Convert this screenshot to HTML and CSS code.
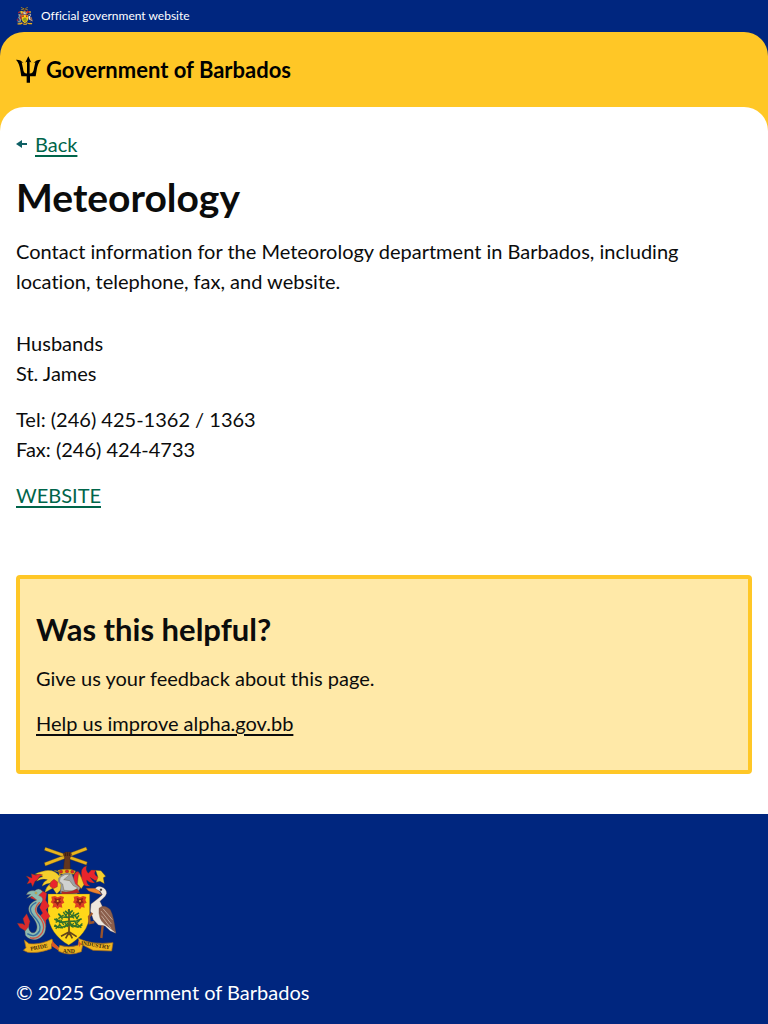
FILE: index.html
```html
<!DOCTYPE html>
<html lang="en">
<head>
<meta charset="utf-8">
<meta name="viewport" content="width=device-width, initial-scale=1">
<title>Meteorology - Government of Barbados</title>
<link rel="stylesheet" href="styles.css">
</head>
<body>
<div class="official">
  <svg class="official-crest" viewBox="18 18 303 327" aria-hidden="true"><use href="#arms"/></svg>
  <span>Official government website</span>
</div>
<div class="header-back">
  <header class="header">
    <a class="brand" href="#">
      <svg class="trident" viewBox="0 0 75 80" aria-hidden="true">
        <path d="M37 0L46 19L41 17V52C49 52 53 46 54 36L58 18L52 21Q62 10 75 11C67 19 64 30 62 42L59 60H42V80H32V60H16L13 42C11 30 8 19 0 11Q13 10 23 21L17 18L21 36C22 46 25 52 33 52V17L28 19Z"/>
      </svg>
      <span>Government of Barbados</span>
    </a>
  </header>
</div>
<div class="main-back">
  <main class="main">
    <a class="back" href="#">
      <svg class="back-arrow" viewBox="0 0 12 10" aria-hidden="true"><path d="M0 5L6 1V4H11V6H6V9Z"/></svg>
      <span>Back</span>
    </a>
    <h1>Meteorology</h1>
    <p class="lead">Contact information for the Meteorology department in Barbados, including location, telephone, fax, and website.</p>
    <div class="contact">
      <p>Husbands<br>St. James</p>
      <p>Tel: (246) 425-1362 / 1363<br>Fax: (246) 424-4733</p>
      <p><a class="website" href="#">WEBSITE</a></p>
    </div>
    <section class="feedback">
      <h2>Was this helpful?</h2>
      <p>Give us your feedback about this page.</p>
      <p><a href="#">Help us improve alpha.gov.bb</a></p>
    </section>
  </main>
</div>
<footer class="footer">
  <svg class="footer-crest" viewBox="18 18 303 327" role="img" aria-label="Coat of arms of Barbados">
    <g id="arms">
      <g stroke="#604713" stroke-width="1">
        <path fill="#e9b51e" d="M103 68L228 21L232 30L106 78ZM106 22L232 66L229 75L103 31Z"/>
        <path fill="#62361f" stroke="#361c12" d="M160 90L164 53L159 41L167 36L182 36L185 44L180 54L181 90Z"/>
        <path stroke="#24110b" stroke-width="2" d="M166 38V48M172 37V48M178 38V48"/>
        <path fill="#f5cf2d" d="M158 130C156 104 145 88 132 92L146 97L148 107Q128 84 98 94Q84 97 74 103Q92 104 98 110Q83 112 80 124Q98 114 112 119Q98 126 96 139Q112 128 124 130Q108 138 104 158L128 145L140 162L152 150Z"/>
        <path fill="#e9252c" d="M49 108L66 114L64 101L78 106Q86 98 98 105Q87 108 82 120L75 124L68 140L63 128L51 132L58 119ZM122 126L132 118L143 126L142 140L130 146L119 138Z"/>
        <path fill="#e9252c" d="M190 128C188 102 200 88 208 98L216 112Q208 84 230 77Q225 90 235 100L244 90L258 91Q248 103 262 110L276 104L272 122L254 121L240 112Q246 122 254 128Q240 131 230 120Q229 132 240 138Q222 140 216 128L210 148L198 150Z"/>
        <path fill="#f5cf2d" d="M257 91L273 92L287 109L280 113L283 131L270 124L258 127L264 112ZM206 98L214 113L222 134L214 146L202 132Z"/>
        <path fill="#edb519" d="M143 91L158 88H183L197 93L192 103H150Z"/>
        <circle cx="153" cy="95" r="5" fill="#d92825"/><circle cx="171" cy="94" r="5" fill="#d92825"/><circle cx="187" cy="95" r="5" fill="#d92825"/>
        <path fill="#9da1a4" stroke="#606467" d="M146 114Q164 92 186 103L196 132L210 143L201 161L151 160L153 134L145 125Z"/>
        <path fill="#d0d2d1" d="M151 112Q166 99 179 104L161 119L179 122L190 137L204 144L194 153L162 151L158 132L148 124Z"/>
        <path fill="#b72328" d="M155 154Q178 160 201 146L209 158L155 164Z"/>
      </g>
      <path fill="#ffd719" stroke="#81621b" d="M114 162H239V220C239 266 208 297 176 315C143 298 114 262 114 220Z"/>
      <g fill="#dc4022">
        <path id="flower" d="M124 170L135 168L143 172L152 168L162 171L159 180L163 188L155 192L157 203L148 201L143 208L137 201L127 203L130 192L122 187L126 180Z"/>
        <use href="#flower" x="67"/>
        <path fill="#8f2417" d="M133 173L142 177L153 173L150 182L155 187L147 190L143 199L138 190L129 187L135 182ZM200 173L209 177L220 173L217 182L222 187L214 190L210 199L205 190L196 187L202 182Z"/>
        <circle cx="143" cy="183" r="3" fill="#f0b52d"/><circle cx="210" cy="183" r="3" fill="#f0b52d"/>
      </g>
      <path stroke="#62441b" stroke-width="5" fill="none" d="M177 207V286M177 276L153 289M177 277L167 295M178 276L200 290M178 277L187 295"/>
      <g stroke="#2f702c" fill="none" stroke-width="5">
        <path d="M177 254L153 263L132 258M177 244L153 247L133 237M177 232L155 231L145 221M177 222L165 213M178 254L204 261L217 254M178 244L200 243L215 236M178 232L195 226L207 219M178 222L188 211"/>
        <path stroke-width="4" d="M134 254L147 264M137 266L149 255M147 251L158 265M152 239L161 255M139 235L151 249M137 247L150 240M147 224L158 238M145 236L161 225M160 216L171 231M164 230L175 217M180 221L192 235M185 233L192 217M193 225L203 237M199 237L207 226M191 242L203 255M196 253L209 241M192 260L205 252M202 253L214 263M207 261L217 250M164 247L173 261M163 263L174 249M180 247L190 263M183 261L191 249M174 209L181 216"/>
      </g>
      <g stroke="#674435" stroke-width="1">
        <path fill="#e4262c" d="M76 153L91 149L110 160L107 181L118 198L108 209L120 229L108 241L108 261L89 270L92 251L83 237L98 219L89 203L96 184L79 181L61 174Z"/>
        <path fill="#8dbab0" d="M49 164Q55 150 74 152Q88 140 98 155L86 166Q105 173 95 187C82 198 76 207 84 220C99 234 114 255 104 278C91 304 60 305 46 286L43 256L56 254C54 272 65 284 76 276C88 261 77 243 66 229C47 208 57 188 80 180L66 169L50 175L62 163Z"/>
        <path fill="#d92a2c" d="M45 256L39 236L50 221L60 244L55 261L46 272L30 263L22 250L38 251Z"/>
        <path fill="none" stroke="#336ea0" stroke-width="4" d="M79 187Q49 202 70 227Q96 252 89 272Q76 296 52 281"/>
        <path fill="none" stroke="#d45243" stroke-width="4" d="M89 187Q68 206 83 225Q110 253 97 277Q82 300 60 293"/>
        <circle cx="78" cy="159" r="3" fill="#f6d747"/>
        <path fill="#eee8df" d="M254 147Q261 136 273 140Q290 145 290 160Q288 170 278 176L270 184L278 201L296 211L304 243L318 280L301 273L285 258L265 255L250 239L241 213L243 192L265 175L277 164L270 153L258 154Z"/>
        <path fill="#ed812d" d="M228 145L254 145L268 153L275 164L252 158L236 153Z"/>
        <circle cx="273" cy="149" r="3" fill="#292523"/>
        <path fill="#8b5e4b" d="M267 205Q282 190 301 209Q312 230 317 278L301 265L284 253Q264 237 267 205Z"/>
        <path fill="none" stroke="#c0a494" stroke-width="3" d="M273 213L304 252M279 206L307 239M274 227L303 265"/>
        <path fill="none" stroke="#9a532b" stroke-width="7" d="M247 219L237 230L239 249L253 246M278 257L274 294"/>
      </g>
      <path fill="#efb520" stroke="#a96d18" stroke-width="2" d="M43 300L57 311Q93 315 126 297L130 310L147 323L149 316Q176 325 204 316L207 303L205 295Q245 316 309 308L305 333L249 331L218 315L214 335Q178 350 146 334L143 320L125 311L124 326Q85 341 53 337L40 331L48 323Z"/>
      <path fill="#d95525" d="M126 302L145 322L144 331L125 318ZM205 302L214 311L207 322Z"/>
    </g>
    <g class="motto">
      <text x="62" y="332" transform="rotate(-11 62 332)">PRIDE</text>
      <text x="158" y="338">AND</text>
      <text x="212" y="314" transform="rotate(9 212 314)">INDUSTRY</text>
    </g>
  </svg>
  <p>© 2025 Government of Barbados</p>
</footer>
</body>
</html>
```
FILE: styles.css
```css
* { box-sizing: border-box; }
body {
  margin: 0;
  background: #fff;
  color: #0b0c0c;
  font-family: Lato, "Open Sans", sans-serif;
  font-size: 20px;
  line-height: 30px;
  font-variant-ligatures: none;
}
h1, h2, p { margin: 0; }
.official {
  display: flex;
  align-items: center;
  gap: 8px;
  height: 32px;
  padding: 0 16px;
  background: #00267f;
  color: #fff;
  font-size: 12px;
  line-height: 18px;
}
.official-crest { width: 17px; height: 18px; }
.header-back { background: #00267f; }
.header {
  padding: 24px 16px;
  border-radius: 24px 24px 0 0;
  background: #ffc726;
}
.brand {
  display: flex;
  align-items: center;
  gap: 5px;
  color: #000;
  font-size: 22px;
  line-height: 27px;
  font-weight: 700;
  text-decoration: none;
}
.trident { width: 25px; height: 27px; }
.main-back { background: linear-gradient(#ffc726 24px, #fff 24px); }
.main {
  padding: 22px 16px 40px;
  border-radius: 24px 24px 0 0;
  background: #fff;
}
.back {
  display: flex;
  width: fit-content;
  align-items: center;
  gap: 7px;
  color: #00654a;
}
.back-arrow { width: 12px; height: 10px; fill: #0e5f64; }
a { text-underline-offset: 3px; }
h1 {
  margin-top: 8px;
  font-size: 39px;
  line-height: 60px;
}
.lead { margin-top: 9px; }
.contact {
  display: grid;
  gap: 16px;
  margin-top: 32px;
}
.website { color: #00654a; }
.feedback {
  display: grid;
  gap: 15px;
  margin-top: 65px;
  padding: 32px 16px;
  border: 4px solid #ffc726;
  border-radius: 4px;
  background: #ffe9a8;
}
.feedback h2 { font-size: 31px; line-height: 37px; }
.feedback a { color: inherit; }
.footer {
  padding: 32px 16px 17px;
  background: #00267f;
  color: #fff;
}
.footer-crest { display: block; width: 101px; height: 109px; }
.footer p { margin-top: 22px; }
.motto {
  fill: #3e290e;
  font-family: "Liberation Serif", serif;
  font-size: 17px;
  font-weight: 700;
}
```
